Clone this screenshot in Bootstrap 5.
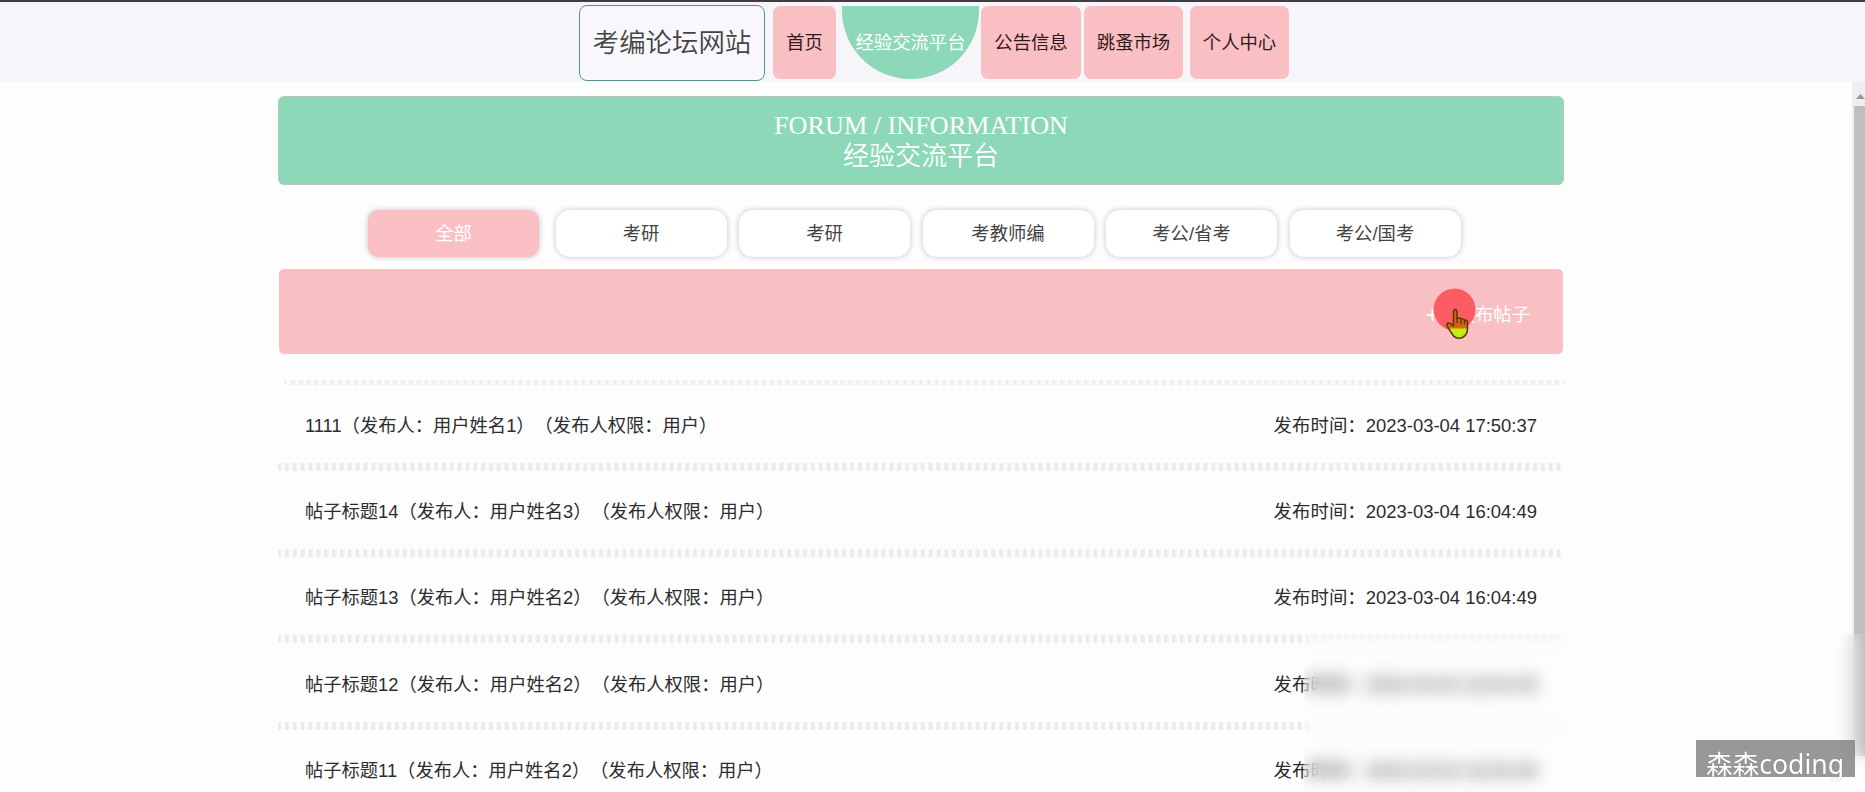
<!DOCTYPE html>
<html lang="zh-CN">
<head>
<meta charset="utf-8">
<title>考编论坛网站</title>
<link href="https://cdn.jsdelivr.net/npm/bootstrap@5.3.0/dist/css/bootstrap.min.css" rel="stylesheet">
<style>
html,body{height:100%;overflow:hidden}
body{background:#fefdfe;font-family:"Liberation Sans","Noto Sans CJK SC",sans-serif;font-size:18.35px;line-height:1.5;color:#333}
.topbar{height:82px;background:#f6f5f9;border-top:2px solid #403c42;padding:3px 0 0 579px}
.site-brand{width:186px;height:76px;border:1px solid #5c9090;border-radius:8px;font-size:26.4px;font-weight:350;color:#444;background:#f8f7fb;margin-right:8px;padding-top:1px}
.nav-pill{height:73px;margin-top:1px;background:#f9bfc3;color:#33191d;border-radius:7px;text-decoration:none;white-space:nowrap}
.nav-pill.current{background:#8dd8b9;color:#fff;border-radius:0 0 69px 69px}
.board{width:1286px;margin-left:278px;padding-top:14px}
.banner{height:89px;background:#8dd8b9;border:1px solid #b5ccbd;border-radius:6px;color:#fff;font-family:"Liberation Serif","Noto Sans CJK SC",serif;font-size:26.2px;line-height:31px;padding-top:13px}
.banner .cn{font-weight:350;font-size:26px}
.tabs{padding:25px 0 0 90px;gap:12.5px}
.tab{width:171px;height:47px;border-radius:14px;background:#fff;box-shadow:0 0 5px 1px #d3d1d6;color:#444;padding-top:1px}
.tab.current{background:#f9bfc3;color:#fff;margin-right:4px;border-radius:11px}
.postbar{height:85px;margin:12px 1px 0;background:#f8c0c2;border-radius:5px;color:#fff;padding:7px 33px 0 0}
.postbar .plus{font-size:24px;line-height:1;margin-right:17px}
.sep{height:8px;border-radius:2px;background:repeating-linear-gradient(90deg,#ebeaf0 0 2px,#fdfcfe 4px 6px,#ebeaf0 7.85px)}
.sep.first{height:5px;margin:26px 0 0 6px;opacity:.75}
.post{height:78.4px;padding:4px 27px 0 27px;color:#2d2d2f}
.sep.first + .post{height:77.5px}
.post-title{font-size:18.3px}
.post-title span{display:inline-block}
.post-time{font-size:18.45px}
.scroll{right:0;top:82px;width:13px;height:674px;background:#eeedf0;padding-top:10px}
.thumb{margin:5px 0 0 2px;height:650px;background:#c0bfc0}
.frost{left:1304px;top:633px;right:0;bottom:0;backdrop-filter:blur(8.5px)}
.pointer{left:1433px;top:288px}
.wm{left:1696px;top:740px;width:159px;height:37px;background:rgba(112,112,112,.72);color:#fff;font-family:"Noto Sans","Noto Sans CJK SC",sans-serif;font-size:26.6px;line-height:49px;white-space:nowrap;padding-left:10px;text-shadow:0 0 1px rgba(90,90,90,.6)}
</style>
</head>
<body class="position-relative">
<header class="topbar d-flex align-items-start">
  <div class="site-brand d-flex align-items-center justify-content-center">考编论坛网站</div>
  <a class="nav-pill d-flex align-items-center justify-content-center" style="width:63px">首页</a>
  <a class="nav-pill current d-flex align-items-center justify-content-center" style="width:137px;margin-left:6px">经验交流平台</a>
  <a class="nav-pill d-flex align-items-center justify-content-center" style="width:100px;margin-left:2px">公告信息</a>
  <a class="nav-pill d-flex align-items-center justify-content-center" style="width:99px;margin-left:3px">跳蚤市场</a>
  <a class="nav-pill d-flex align-items-center justify-content-center" style="width:99px;margin-left:7px">个人中心</a>
</header>
<main class="board">
  <div class="banner text-center"><div>FORUM / INFORMATION</div><div class="cn">经验交流平台</div></div>
  <div class="tabs d-flex">
    <div class="tab current d-flex align-items-center justify-content-center">全部</div>
    <div class="tab d-flex align-items-center justify-content-center">考研</div>
    <div class="tab d-flex align-items-center justify-content-center">考研</div>
    <div class="tab d-flex align-items-center justify-content-center">考教师编</div>
    <div class="tab d-flex align-items-center justify-content-center">考公/省考</div>
    <div class="tab d-flex align-items-center justify-content-center">考公/国考</div>
  </div>
  <div class="postbar d-flex align-items-center justify-content-end"><span class="plus">+</span>发布帖子</div>
  <div class="sep first"></div>
  <div class="post d-flex align-items-center justify-content-between"><div class="post-title"><span>1111（发布人：用户姓名1）</span><span>（发布人权限：用户）</span></div><div class="post-time">发布时间：2023-03-04 17:50:37</div></div>
  <div class="sep"></div>
  <div class="post d-flex align-items-center justify-content-between"><div class="post-title"><span>帖子标题14（发布人：用户姓名3）</span><span>（发布人权限：用户）</span></div><div class="post-time">发布时间：2023-03-04 16:04:49</div></div>
  <div class="sep"></div>
  <div class="post d-flex align-items-center justify-content-between"><div class="post-title"><span>帖子标题13（发布人：用户姓名2）</span><span>（发布人权限：用户）</span></div><div class="post-time">发布时间：2023-03-04 16:04:49</div></div>
  <div class="sep"></div>
  <div class="post d-flex align-items-center justify-content-between"><div class="post-title"><span>帖子标题12（发布人：用户姓名2）</span><span>（发布人权限：用户）</span></div><div class="post-time">发布时间：2023-03-04 16:04:49</div></div>
  <div class="sep"></div>
  <div class="post d-flex align-items-center justify-content-between"><div class="post-title"><span>帖子标题11（发布人：用户姓名2）</span><span>（发布人权限：用户）</span></div><div class="post-time">发布时间：2023-03-04 16:04:49</div></div>
</main>
<div class="scroll position-absolute">
  <svg class="d-block ms-1" width="9" height="9" viewBox="0 0 9 9"><path d="M0 7 4.5 2 9 7z" fill="#98979b"/></svg>
  <div class="thumb"></div>
</div>
<svg class="pointer position-absolute" width="44" height="54" viewBox="0 0 44 54">
  <defs><linearGradient id="hand" x1="0" y1="0" x2="0" y2="1"><stop offset=".62" stop-color="#d9600f"/><stop offset=".7" stop-color="#c6ee12"/></linearGradient></defs>
  <circle cx="21.5" cy="21.5" r="21" fill="#fd5c64"/>
  <path d="M20.5 36V24q0-2.500 1.700-2.500T24 24v6.500q3-1.300 4 .6 2.700-.8 3.500 1 3-.3 3 2.400v6.200q0 4-2 6.300-2.500 3.200-6.500 3.200-4.300 0-6.500-3.700L14.300 38.500q-1.300-3 1-3.500 2-.3 5.200 3z" fill="url(#hand)" stroke="#58380d" stroke-width="1.500" stroke-linejoin="round"/>
  <path d="M24 30v5M28 31v5M31.500 32v4.500" stroke="#58380d" stroke-width="1.300"/>
</svg>
<div class="frost position-absolute"></div>
<div class="wm position-absolute">森森coding</div>
<script src="https://cdn.jsdelivr.net/npm/bootstrap@5.3.0/dist/js/bootstrap.bundle.min.js"></script>
</body>
</html>
